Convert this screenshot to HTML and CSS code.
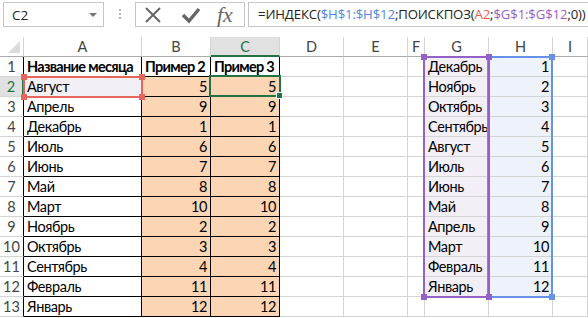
FILE: index.html
```html
<!DOCTYPE html>
<html lang="ru">
<head>
  <meta charset="UTF-8">
  <title>ИНДЕКС и ПОИСКПОЗ</title>
  <link rel="stylesheet" href="styles.css">
</head>
<body>
  <div class="formula-bar">
    <div class="name-box"><span>C2</span><span class="caret"></span></div>
    <div class="grip"><i></i><i></i><i></i></div>
    <div class="fx-box">
      <svg class="icon" width="20" height="18" viewBox="0 0 20 18">
        <path d="M3 2 L17 16 M17 2 L3 16" stroke="#666" stroke-width="2" fill="none"/>
      </svg>
      <svg class="icon" width="20" height="18" viewBox="0 0 20 18">
        <path d="M2 9 L8 15 L18 3" stroke="#666" stroke-width="3.4" fill="none"/>
      </svg>
      <span class="fx">fx</span>
    </div>
    <div class="formula">=ИНДЕКС(<span class="ref-h">$H$1:$H$12</span>;ПОИСКПОЗ(<span class="ref-a">A2</span>;<span class="ref-g">$G$1:$G$12</span>;0))</div>
  </div>

  <div class="sheet">
    <div class="row head">
      <div class="corner"><span></span></div>
      <div class="ch">A</div><div class="ch">B</div><div class="ch sel">C</div><div class="ch">D</div>
      <div class="ch">E</div><div class="ch">F</div><div class="ch">G</div><div class="ch">H</div><div class="ch last">I</div>
    </div>
    <div class="row">
      <div class="rh">1</div>
      <div class="c t b">Название месяца</div><div class="c t b">Пример 2</div><div class="c t b">Пример 3</div>
      <div class="c"></div><div class="c"></div><div class="c"></div>
      <div class="c g">Декабрь</div><div class="c hh n">1</div><div class="c"></div>
    </div>
    <div class="row">
      <div class="rh sel">2</div>
      <div class="c t a2">Август</div><div class="c t p n">5</div><div class="c t p n">5</div>
      <div class="c"></div><div class="c"></div><div class="c"></div>
      <div class="c g">Ноябрь</div><div class="c hh n">2</div><div class="c"></div>
    </div>
    <div class="row">
      <div class="rh">3</div>
      <div class="c t">Апрель</div><div class="c t p n">9</div><div class="c t p n">9</div>
      <div class="c"></div><div class="c"></div><div class="c"></div>
      <div class="c g">Октябрь</div><div class="c hh n">3</div><div class="c"></div>
    </div>
    <div class="row">
      <div class="rh">4</div>
      <div class="c t">Декабрь</div><div class="c t p n">1</div><div class="c t p n">1</div>
      <div class="c"></div><div class="c"></div><div class="c"></div>
      <div class="c g">Сентябрь</div><div class="c hh n">4</div><div class="c"></div>
    </div>
    <div class="row">
      <div class="rh">5</div>
      <div class="c t">Июль</div><div class="c t p n">6</div><div class="c t p n">6</div>
      <div class="c"></div><div class="c"></div><div class="c"></div>
      <div class="c g">Август</div><div class="c hh n">5</div><div class="c"></div>
    </div>
    <div class="row">
      <div class="rh">6</div>
      <div class="c t">Июнь</div><div class="c t p n">7</div><div class="c t p n">7</div>
      <div class="c"></div><div class="c"></div><div class="c"></div>
      <div class="c g">Июль</div><div class="c hh n">6</div><div class="c"></div>
    </div>
    <div class="row">
      <div class="rh">7</div>
      <div class="c t">Май</div><div class="c t p n">8</div><div class="c t p n">8</div>
      <div class="c"></div><div class="c"></div><div class="c"></div>
      <div class="c g">Июнь</div><div class="c hh n">7</div><div class="c"></div>
    </div>
    <div class="row">
      <div class="rh">8</div>
      <div class="c t">Март</div><div class="c t p n">10</div><div class="c t p n">10</div>
      <div class="c"></div><div class="c"></div><div class="c"></div>
      <div class="c g">Май</div><div class="c hh n">8</div><div class="c"></div>
    </div>
    <div class="row">
      <div class="rh">9</div>
      <div class="c t">Ноябрь</div><div class="c t p n">2</div><div class="c t p n">2</div>
      <div class="c"></div><div class="c"></div><div class="c"></div>
      <div class="c g">Апрель</div><div class="c hh n">9</div><div class="c"></div>
    </div>
    <div class="row">
      <div class="rh">10</div>
      <div class="c t">Октябрь</div><div class="c t p n">3</div><div class="c t p n">3</div>
      <div class="c"></div><div class="c"></div><div class="c"></div>
      <div class="c g">Март</div><div class="c hh n">10</div><div class="c"></div>
    </div>
    <div class="row">
      <div class="rh">11</div>
      <div class="c t">Сентябрь</div><div class="c t p n">4</div><div class="c t p n">4</div>
      <div class="c"></div><div class="c"></div><div class="c"></div>
      <div class="c g">Февраль</div><div class="c hh n">11</div><div class="c"></div>
    </div>
    <div class="row">
      <div class="rh">12</div>
      <div class="c t">Февраль</div><div class="c t p n">11</div><div class="c t p n">11</div>
      <div class="c"></div><div class="c"></div><div class="c"></div>
      <div class="c g">Январь</div><div class="c hh n">12</div><div class="c"></div>
    </div>
    <div class="row">
      <div class="rh">13</div>
      <div class="c t">Январь</div><div class="c t p n">12</div><div class="c t p n">12</div>
      <div class="c"></div><div class="c"></div><div class="c"></div>
      <div class="c"></div><div class="c"></div><div class="c"></div>
    </div>

    <!-- range highlights drawn over the grid -->
    <div class="range range-a">
      <b class="hd tl"></b><b class="hd tr"></b><b class="hd bl"></b><b class="hd br"></b>
    </div>
    <div class="range range-h">
      <b class="hd tr"></b><b class="hd br"></b>
    </div>
    <div class="range range-g">
      <b class="hd tl"></b><b class="hd tr"></b><b class="hd bl"></b><b class="hd br"></b>
    </div>
    <div class="active"><b class="fill-handle"></b></div>
  </div>
</body>
</html>
```

FILE: styles.css
```css
body {
  margin: 0;
  background: #fff;
  font-family: 'Lato', 'Liberation Sans', sans-serif;
  overflow: hidden;
}

/* formula bar */
.formula-bar {
  display: flex;
  align-items: flex-start;
  height: 37px;
  padding: 2px 0 0 3px;
  box-sizing: border-box;
  font-family: 'Open Sans', 'Liberation Sans', sans-serif;
  font-size: 13.2px;
  color: #222;
}

.name-box {
  width: 101px;
  height: 25px;
  box-sizing: border-box;
  border: 1px solid #c6c6c6;
  display: flex;
  align-items: center;
  justify-content: space-between;
  padding: 0 6px 0 8px;
  font-size: 13.5px;
}

.caret {
  width: 0;
  height: 0;
  border-left: 4px solid transparent;
  border-right: 4px solid transparent;
  border-top: 4px solid #777;
}

.grip {
  width: 31px;
  display: flex;
  flex-direction: column;
  align-items: center;
  gap: 2px;
  padding-top: 7px;
}

.grip i {
  width: 2px;
  height: 2px;
  background: #b4b4b4;
}

.fx-box {
  width: 110px;
  height: 25px;
  box-sizing: border-box;
  border: 1px solid #c6c6c6;
  display: flex;
  align-items: center;
  padding-left: 7px;
}

.icon {
  margin-right: 18px;
}

.fx {
  font-family: 'Liberation Serif', serif;
  font-style: italic;
  font-size: 22px;
  color: #666;
  margin-left: -2px;
}

.formula {
  flex: 1;
  height: 25px;
  box-sizing: border-box;
  border: 1px solid #c6c6c6;
  border-right: none;
  margin-left: 3px;
  padding-left: 9px;
  line-height: 23px;
  letter-spacing: -0.15px;
  white-space: nowrap;
  overflow: hidden;
}

.ref-h { color: #4f86e0; }
.ref-a { color: #e4604f; }
.ref-g { color: #9a5dc4; }

/* sheet grid */
.sheet {
  position: relative;
  font-size: 14.5px;
  letter-spacing: -0.4px;
  color: #000;
}

.row {
  display: grid;
  grid-template-columns: 24px 118px 69px 69px 64px 64px 17px 64px 64px 1fr;
  height: 20px;
}

.row > div {
  box-sizing: border-box;
  border-right: 1px solid #d4d4d4;
  border-bottom: 1px solid #d4d4d4;
  line-height: 19px;
  padding: 0 3px;
  white-space: nowrap;
  overflow: hidden;
}

.head > div {
  text-align: center;
  color: #444;
  letter-spacing: 0;
  border-bottom-color: #ababab;
}

.ch.sel {
  background: #e1e1e1;
  color: #217346;
  border-bottom: 2px solid #217346;
}

.corner {
  position: relative;
}

.corner span {
  position: absolute;
  right: 3px;
  bottom: 3px;
  width: 0;
  height: 0;
  border-left: 12px solid transparent;
  border-bottom: 12px solid #dcdcdc;
}

.rh {
  text-align: center;
  color: #444;
  letter-spacing: 0;
  border-right-color: #000 !important;
}

.rh.sel {
  background: #e1e1e1;
  color: #217346;
  border-right: 2px solid #217346 !important;
}

.c.t {
  border-right-color: #000;
  border-bottom-color: #000;
}

.b {
  font-weight: bold;
  letter-spacing: -0.7px;
}

.n { text-align: right; }
.p { background: #fcd5b4; }
.a2 { background: #f3eff6; }
.g { background: #f3eff7; }
.hh { background: #eef2fb; }

/* range highlights */
.range {
  position: absolute;
  border: 2px solid;
  box-sizing: border-box;
}

.range-a {
  left: 23px;
  top: 39px;
  width: 120px;
  height: 22px;
  border-color: #e4665c;
}

.range-g {
  left: 423px;
  top: 19px;
  width: 67px;
  height: 242px;
  border-color: #9361c8;
}

.range-h {
  left: 487px;
  top: 19px;
  width: 66px;
  height: 242px;
  border-color: #6691e8;
}

.hd {
  position: absolute;
  width: 6px;
  height: 6px;
}

.range-a .hd { background: #e4665c; }
.range-g .hd { background: #9361c8; }
.range-h .hd { background: #6691e8; }

.tl { left: -4px; top: -4px; }
.tr { right: -4px; top: -4px; }
.bl { left: -4px; bottom: -4px; }
.br { right: -4px; bottom: -4px; }

.active {
  position: absolute;
  left: 209px;
  top: 38px;
  width: 72px;
  height: 22px;
  border: 2px solid #217346;
  box-sizing: border-box;
}

.fill-handle {
  position: absolute;
  right: -4px;
  bottom: -4px;
  width: 5px;
  height: 5px;
  background: #217346;
  border: 1px solid #fff;
}
```
